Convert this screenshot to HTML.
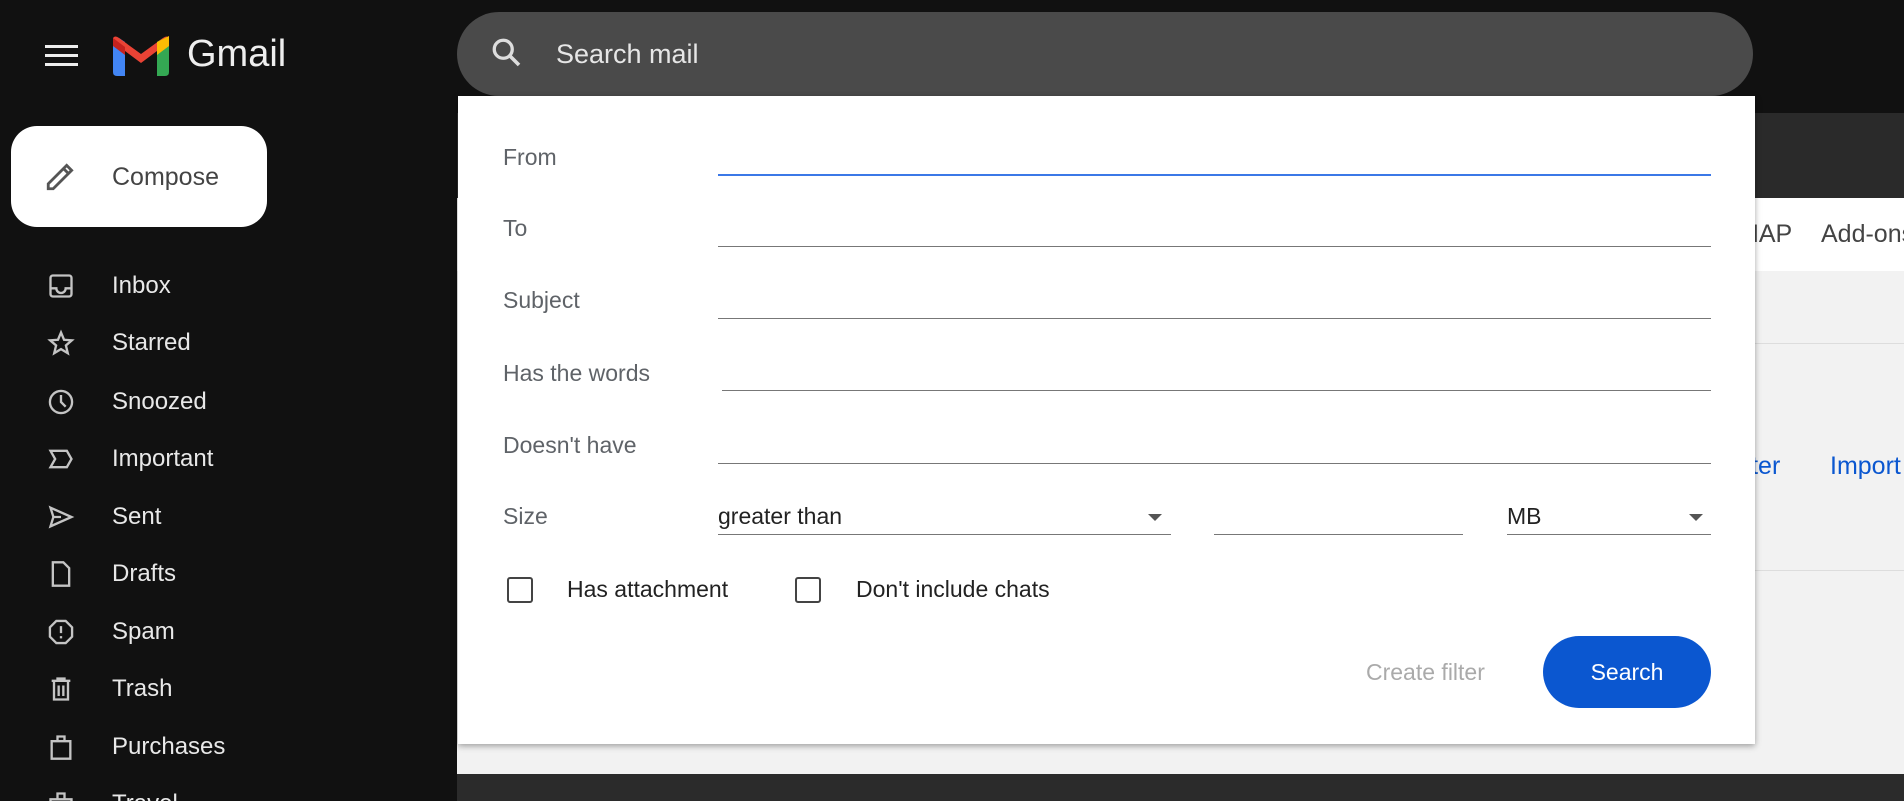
<!DOCTYPE html>
<html style="overflow:hidden;width:1904px;height:801px"><head><meta charset="utf-8"><style>
*{margin:0;padding:0;box-sizing:border-box}
body{width:1904px;height:801px;overflow:hidden;background:#111;font-family:"Liberation Sans",sans-serif;position:relative}
.abs{position:absolute}
.nav{position:absolute;left:0;width:300px;height:40px}
.nav svg{position:absolute;left:47px;top:6px}
.nav span{position:absolute;left:112px;top:6px;font-size:24px;color:#e8e8e8}
.lbl{position:absolute;left:503px;font-size:23px;color:#5f6368}
.line{position:absolute;height:1px;background:#777}
.cb{position:absolute;width:26px;height:26px;border:2px solid #444;border-radius:3px}
.ct{position:absolute;font-size:23px;color:#222}
</style></head><body>
<div class="abs" style="left:457px;top:113px;width:1447px;height:85px;background:#2a2a2a"></div>
<div class="abs" style="left:457px;top:198px;width:1447px;height:73px;background:#fff"></div>
<div class="abs" style="left:457px;top:271px;width:1447px;height:503px;background:#f2f2f2"></div>
<div class="abs" style="left:1755px;top:343px;width:149px;height:1px;background:#ddd"></div>
<div class="abs" style="left:1755px;top:570px;width:149px;height:1px;background:#ddd"></div>
<div class="abs" style="left:1738px;top:220px;font-size:25px;color:#444;white-space:nowrap">MAP</div>
<div class="abs" style="left:1821px;top:220px;font-size:25px;color:#444;white-space:nowrap">Add-ons</div>
<div class="abs" style="left:1740px;top:452px;font-size:25px;color:#0b57d0;white-space:nowrap">ilter</div>
<div class="abs" style="left:1830px;top:452px;font-size:25px;color:#0b57d0;white-space:nowrap">Import</div>
<div class="abs" style="left:457px;top:774px;width:1447px;height:27px;background:#2b2b2b"></div>

<div class="abs" style="left:45px;top:45px;width:33px;height:3px;background:#eee;box-shadow:0 9px 0 #eee,0 18px 0 #eee"></div>
<svg class="abs" style="left:113px;top:36px" width="56" height="40" viewBox="0 0 56 40">
<path d="M0 6 Q0 0 6 2 L12 6 V40 H4 Q0 40 0 36Z" fill="#4285f4"/>
<path d="M44 6 L50 2 Q56 0 56 6 V36 Q56 40 52 40 H44Z" fill="#34a853"/>
<path d="M0 6 L28 27 L56 6 L56 2 Q54 -1 50 2 L28 18 L6 2 Q2 -1 0 2Z" fill="#ea4335"/>
<path d="M44 6 L56 0 V10 L44 19Z" fill="#fbbc04"/>
<path d="M0 2 L12 11 V19 L0 10Z" fill="#c5221f"/>
</svg>
<div class="abs" style="left:187px;top:33px;font-size:38px;color:#eee">Gmail</div>

<div class="abs" style="left:457px;top:12px;width:1296px;height:84px;border-radius:42px;background:#4a4a4a"></div>
<svg class="abs" style="left:489px;top:35px" width="36" height="36" viewBox="0 0 24 24"><circle cx="9.5" cy="9.5" r="6" fill="none" stroke="#ddd" stroke-width="2.2"/><path d="M14 14l6 6" stroke="#ddd" stroke-width="2.4"/></svg>
<div class="abs" style="left:556px;top:39px;font-size:27px;color:#e6e6e6">Search mail</div>

<div class="abs" style="left:11px;top:126px;width:256px;height:101px;border-radius:26px;background:#fff"></div>
<svg class="abs" style="left:44px;top:159px" width="34" height="34" viewBox="0 0 24 24"><path d="M3 21v-3.5L16 4.5l3.5 3.5L6.5 21z M14 7l3.5 3.5" fill="none" stroke="#555" stroke-width="2"/></svg>
<div class="abs" style="left:112px;top:163px;font-size:25px;color:#444">Compose</div>

<div class="nav" style="top:266px"><svg width="28" height="28" viewBox="0 0 24 24" fill="none" stroke="#c4c4c4" stroke-width="2"><rect x="3" y="3" width="18" height="18" rx="2"/><path d="M3 14h5a4 4 0 0 0 8 0h5"/></svg><span>Inbox</span></div>
<div class="nav" style="top:323px"><svg width="28" height="28" viewBox="0 0 24 24" fill="none" stroke="#c4c4c4" stroke-width="2"><path d="M12 3l2.6 6.2 6.7.5-5.1 4.4 1.6 6.6L12 17.2 6.2 20.7l1.6-6.6-5.1-4.4 6.7-.5z"/></svg><span>Starred</span></div>
<div class="nav" style="top:382px"><svg width="28" height="28" viewBox="0 0 24 24" fill="none" stroke="#c4c4c4" stroke-width="2"><circle cx="12" cy="12" r="9.5"/><path d="M12 6v6l4 4"/></svg><span>Snoozed</span></div>
<div class="nav" style="top:439px"><svg width="28" height="28" viewBox="0 0 24 24" fill="none" stroke="#c4c4c4" stroke-width="2"><path d="M3 5h14l4 7-4 7H3l4-7z"/></svg><span>Important</span></div>
<div class="nav" style="top:497px"><svg width="28" height="28" viewBox="0 0 24 24" fill="none" stroke="#c4c4c4" stroke-width="2"><path d="M3 4l18 8-18 8 2.5-8z M5.5 12H12"/></svg><span>Sent</span></div>
<div class="nav" style="top:554px"><svg width="28" height="28" viewBox="0 0 24 24" fill="none" stroke="#c4c4c4" stroke-width="2"><path d="M5 2h9l5 5v15H5z"/></svg><span>Drafts</span></div>
<div class="nav" style="top:612px"><svg width="28" height="28" viewBox="0 0 24 24" fill="none" stroke="#c4c4c4" stroke-width="2"><path d="M8 2.5h8l5.5 5.5v8L16 21.5H8L2.5 16V8z"/><path d="M12 7v6M12 15.5v2"/></svg><span>Spam</span></div>
<div class="nav" style="top:669px"><svg width="28" height="28" viewBox="0 0 24 24" fill="none" stroke="#c4c4c4" stroke-width="2"><path d="M4 5h16M9 5V3h6v2M6 5v16h12V5M10 9v9M14 9v9"/></svg><span>Trash</span></div>
<div class="nav" style="top:727px"><svg width="28" height="28" viewBox="0 0 24 24" fill="none" stroke="#c4c4c4" stroke-width="2"><path d="M4 7h16v15H4z M9 7V3h6v4"/></svg><span>Purchases</span></div>
<div class="nav" style="top:784px"><svg width="28" height="28" viewBox="0 0 24 24" fill="none" stroke="#c4c4c4" stroke-width="2"><path d="M3 8h18v13H3z M9 8V3h6v5"/></svg><span>Travel</span></div>

<div class="abs" style="left:458px;top:96px;width:1297px;height:648px;background:#fff;box-shadow:0 2px 6px rgba(0,0,0,.35)"></div>
<div class="lbl" style="top:144px">From</div>
<div class="lbl" style="top:215px">To</div>
<div class="lbl" style="top:287px">Subject</div>
<div class="lbl" style="top:360px">Has the words</div>
<div class="lbl" style="top:432px">Doesn't have</div>
<div class="lbl" style="top:503px">Size</div>
<div class="line" style="left:718px;top:174px;width:993px;height:2px;background:#3b78e7"></div>
<div class="line" style="left:718px;top:246px;width:993px"></div>
<div class="line" style="left:718px;top:318px;width:993px"></div>
<div class="line" style="left:722px;top:390px;width:989px"></div>
<div class="line" style="left:718px;top:463px;width:993px"></div>
<div class="ct" style="left:718px;top:503px">greater than</div>
<div class="abs" style="left:1148px;top:514px;border-left:7px solid transparent;border-right:7px solid transparent;border-top:7px solid #555"></div>
<div class="line" style="left:718px;top:534px;width:453px"></div>
<div class="line" style="left:1214px;top:534px;width:249px"></div>
<div class="ct" style="left:1507px;top:503px">MB</div>
<div class="abs" style="left:1689px;top:514px;border-left:7px solid transparent;border-right:7px solid transparent;border-top:7px solid #555"></div>
<div class="line" style="left:1507px;top:534px;width:204px"></div>
<div class="cb" style="left:507px;top:577px"></div>
<div class="ct" style="left:567px;top:576px">Has attachment</div>
<div class="cb" style="left:795px;top:577px"></div>
<div class="ct" style="left:856px;top:576px">Don't include chats</div>
<div class="abs" style="left:1366px;top:659px;font-size:23px;color:#aaa">Create filter</div>
<div class="abs" style="left:1543px;top:636px;width:168px;height:72px;border-radius:36px;background:#0b57d0;color:#fff;font-size:23px;text-align:center;line-height:72px">Search</div>
</body></html>
